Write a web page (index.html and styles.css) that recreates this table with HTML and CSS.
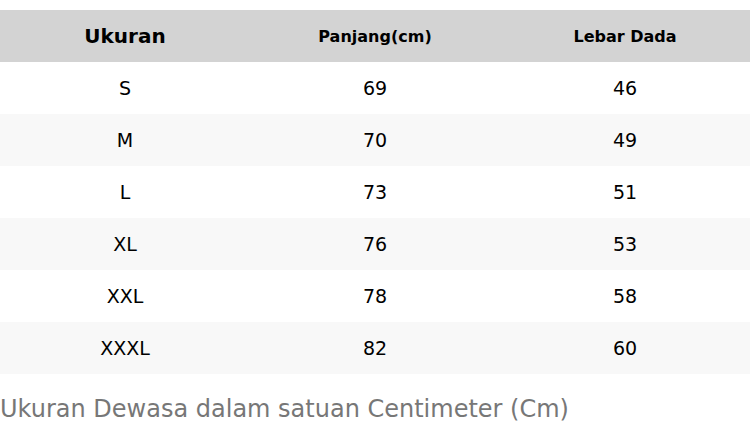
FILE: index.html
```html
<!DOCTYPE html>
<html lang="id">
<head>
<meta charset="utf-8">
<title>Ukuran</title>
<link rel="stylesheet" href="styles.css">
</head>
<body>
<div class="page">
  <table class="size-table">
    <thead>
      <tr>
        <th class="h-main">Ukuran</th>
        <th class="h-sub">Panjang(cm)</th>
        <th class="h-sub">Lebar Dada</th>
      </tr>
    </thead>
    <tbody>
      <tr><td>S</td><td>69</td><td>46</td></tr>
      <tr><td>M</td><td>70</td><td>49</td></tr>
      <tr><td>L</td><td>73</td><td>51</td></tr>
      <tr><td>XL</td><td>76</td><td>53</td></tr>
      <tr><td>XXL</td><td>78</td><td>58</td></tr>
      <tr><td>XXXL</td><td>82</td><td>60</td></tr>
    </tbody>
  </table>
  <p class="caption">Ukuran Dewasa dalam satuan Centimeter (Cm)</p>
</div>
</body>
</html>
```
FILE: styles.css
```css
html, body {
  margin: 0;
  padding: 0;
  background: #ffffff;
}
body {
  font-family: "DejaVu Sans", sans-serif;
  color: #000;
}
.page {
  padding-top: 10px;
}
.size-table {
  width: 100%;
  border-collapse: collapse;
  table-layout: fixed;
}
.size-table th,
.size-table td {
  height: 52px;
  padding: 0;
  text-align: center;
  vertical-align: middle;
}
.size-table thead tr {
  background: #d3d3d3;
}
.h-main {
  font-size: 20px;
  font-weight: bold;
}
.h-sub {
  font-size: 16px;
  font-weight: bold;
}
.size-table td {
  font-size: 19px;
}
.size-table tbody tr:nth-child(even) {
  background: #f8f8f8;
}
.caption {
  margin: 21px 0 0 0;
  font-size: 24px;
  line-height: 28px;
  color: #777777;
}
```
